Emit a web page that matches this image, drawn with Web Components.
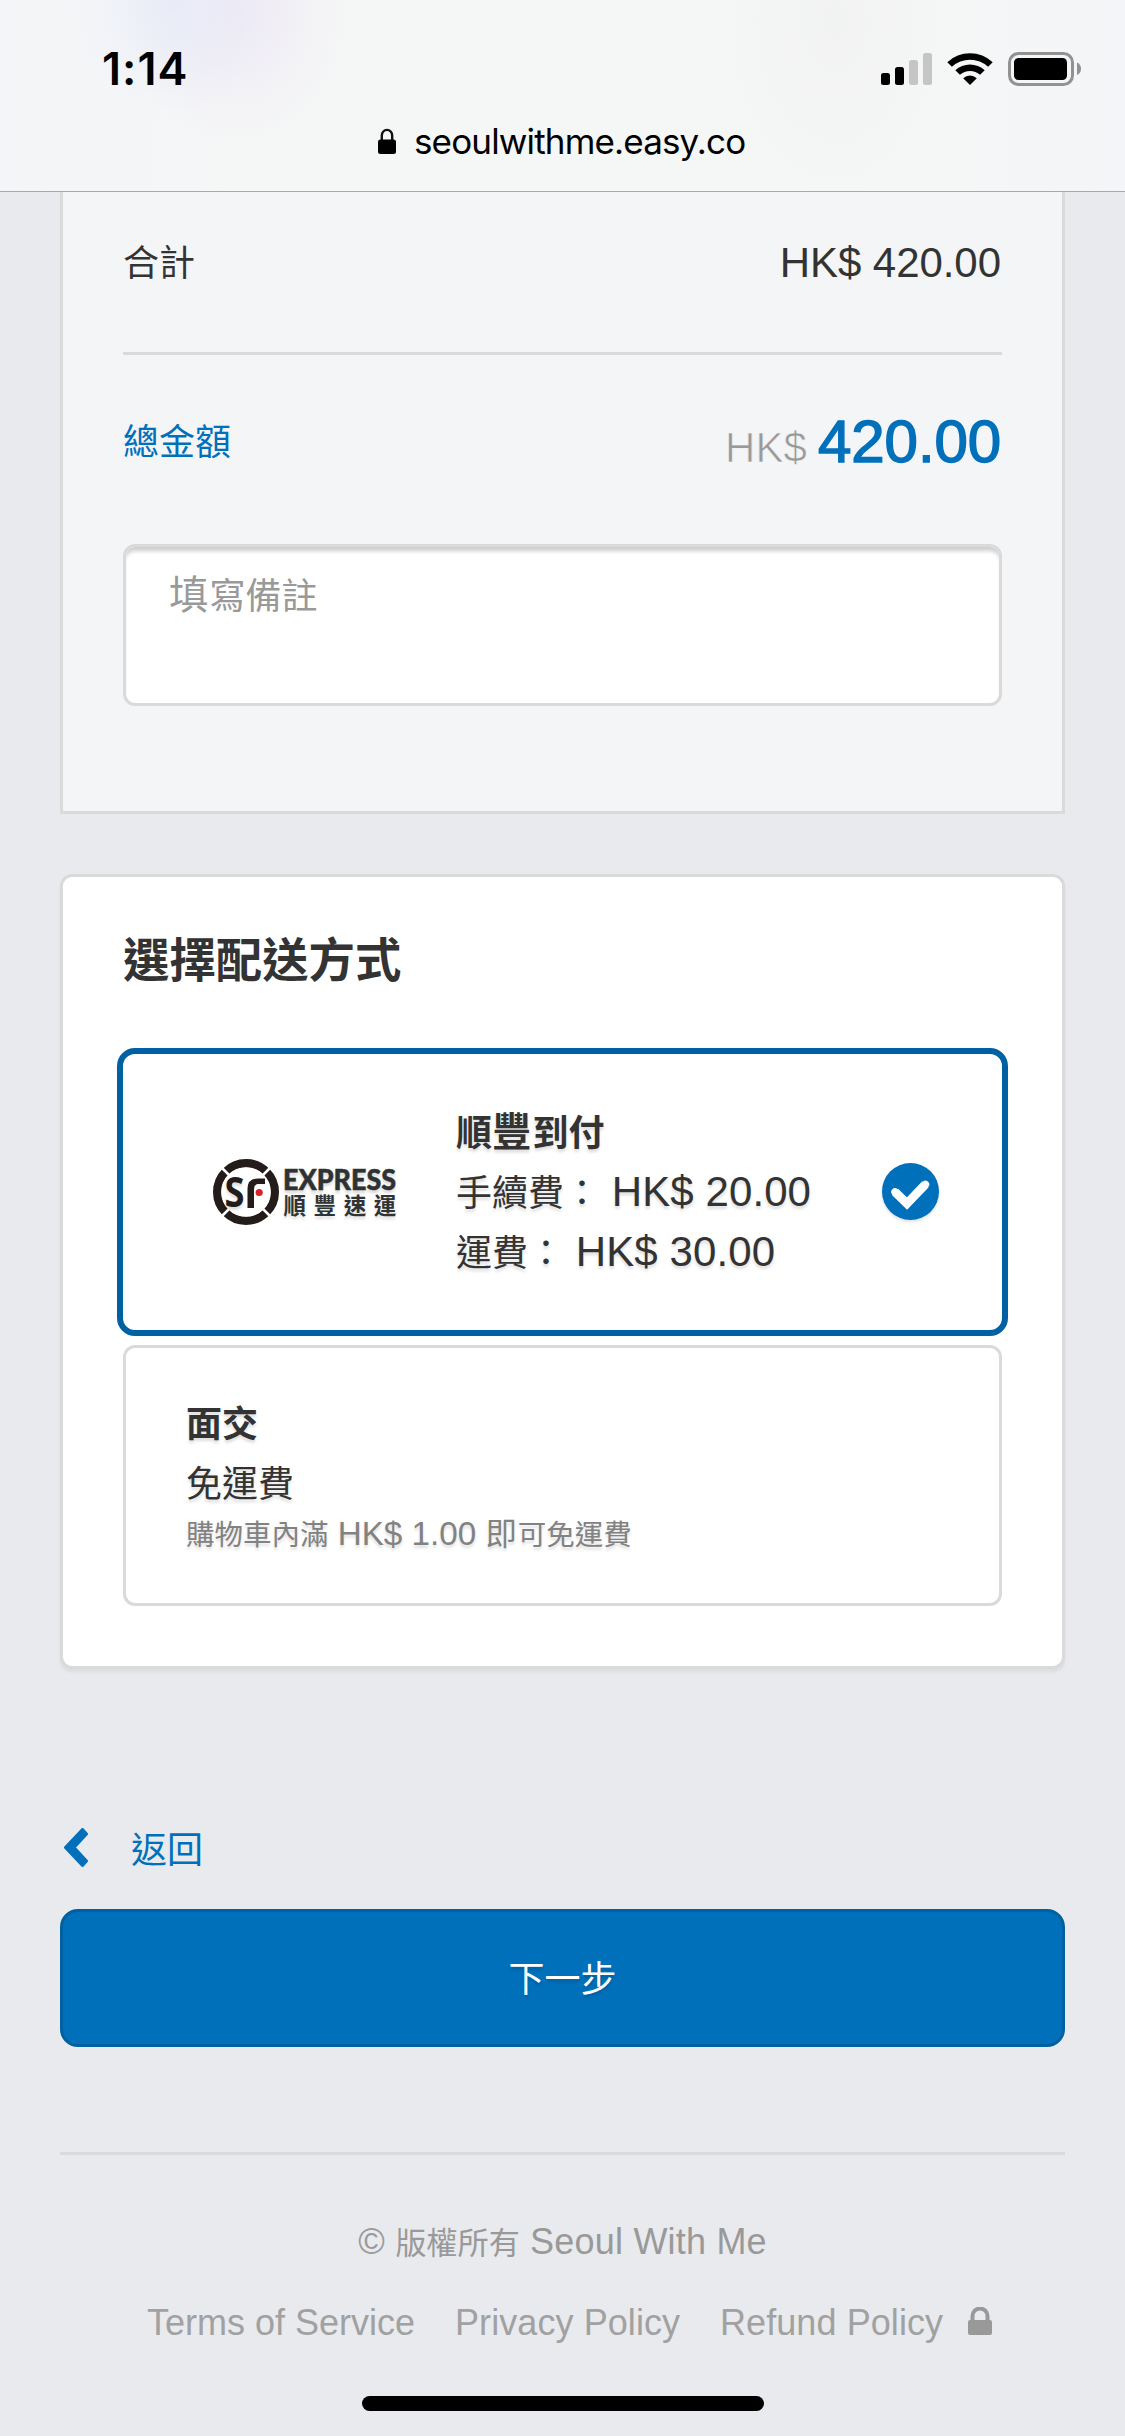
<!DOCTYPE html>
<html lang="zh-Hant">
<head>
<meta charset="utf-8">
<title>seoulwithme.easy.co</title>
<style>
  html, body { margin: 0; }
  body {
    width: 1125px; height: 2436px; overflow: hidden; background: #e9eaee; color: #333;
    font: 42px/60px "Liberation Sans", "Noto Sans CJK TC", sans-serif;
    --blue: #0070bb; --blue-dark: #0061a2; --line: #dadada;
  }
</style>
</head>
<body>
<checkout-page></checkout-page>
<script>
const define = (name, html) => {
  const tpl = document.createElement('template');
  tpl.innerHTML = html;
  customElements.define(name, class extends HTMLElement {
    constructor() {
      super();
      this.attachShadow({ mode: 'open' }).append(tpl.content.cloneNode(true));
    }
  });
};

/* Han text, set smaller than the Latin text beside it */
define('han-text', `<style>:host{display:inline;font-size:.857em;line-height:0;letter-spacing:0}:host([wide]){font-size:.94em;letter-spacing:1px}</style><slot></slot>`);

define('status-bar', `<style>
  :host{display:flex;height:120px;padding:0 44px 0 102px;justify-content:space-between;box-sizing:border-box}
  .time{font:600 45px/60px Inter,sans-serif;color:#000;margin-top:39px;letter-spacing:1px}
  svg{display:block;margin-top:50px}
</style>
<span class="time">1:14</span>
<svg width="200" height="38" viewBox="881 50 200 38">
  <rect x="881" y="73" width="9" height="12" rx="2.5"/>
  <rect x="895" y="67" width="9" height="18" rx="2.5"/>
  <rect x="909" y="60" width="9" height="25" rx="2.5" fill="#c5c5c5"/>
  <rect x="923" y="53" width="9" height="32" rx="2.5" fill="#c5c5c5"/>
  <path d="M947.3 62.2a33 33 0 0 1 45.4 0l-4.6 4.6a26.6 26.6 0 0 0-36.200 0z"/>
  <path d="M955.300 70.200a21.500 21.500 0 0 1 29.400 0l-4.600 4.600a15 15 0 0 0-20.200 0z"/>
  <path d="M963.200 78.200a10 10 0 0 1 13.600 0l-6.800 6.800z"/>
  <rect x="1009.500" y="53.500" width="63" height="31" rx="9" fill="none" stroke="#929292" stroke-width="3"/>
  <rect x="1014" y="58" width="53" height="22" rx="4.500"/>
  <path d="M1077 62.500q4 1.800 4 6.200t-4 6.200z" fill="#929292"/>
</svg>`);

define('address-bar', `<style>
  :host{display:flex;height:71px;padding-left:378px;box-sizing:border-box}
  svg{display:block;margin:8px 18px 0 0}
  span{font:400 35px/42px Inter,sans-serif;color:#000;letter-spacing:-.85px}
</style>
<svg width="18" height="26" viewBox="0 0 18 26"><path d="M3.800 13V7.500a5.200 5.600 0 0 1 10.400 0V13" fill="none" stroke="#111" stroke-width="2.400"/><rect y="11.500" width="18" height="14.500" rx="2.500"/></svg>
<span><slot></slot></span>`);

define('browser-header', `<style>
  :host{display:block;height:192px;box-sizing:border-box;border-bottom:1px solid #a7aaaa;
    background:
      radial-gradient(ellipse 100px 115px at 172px 0,rgba(226,232,248,.6),transparent),
      radial-gradient(ellipse 110px 130px at 235px 10px,rgba(234,227,244,.65),transparent),
      radial-gradient(ellipse 110px 170px at 835px 20px,rgba(240,240,240,.7),transparent),
      linear-gradient(90deg,#f4f5f8,#f5f6f6 20%,#f5f6f6 85%,#f4f5f8)}
</style><status-bar></status-bar><address-bar>seoulwithme.easy.co</address-bar>`);

define('subtotal-row', `<style>
  :host{display:flex;justify-content:space-between;height:119px;padding-top:1px;border-bottom:3px solid var(--line)}
  .k{margin-top:-1px}
  .v{letter-spacing:-.05px;margin-right:1px}
</style><span class="k"><han-text><slot name="label"></slot></han-text></span><span class="v"><slot></slot></span>`);

define('total-row', `<style>
  :host{display:flex;justify-content:space-between;height:90px;margin-top:42px}
  .k{color:var(--blue);margin-top:14px}
  .v{font-size:60px;line-height:90px;color:var(--blue);-webkit-text-stroke:1.500px var(--blue);letter-spacing:-.1px;margin-right:1px}
  .c{font-size:42px;line-height:0;color:#999;-webkit-text-stroke:.700px #f4f5f7;margin-right:11px;letter-spacing:.1px}
</style><span class="k"><han-text><slot name="label"></slot></han-text></span>
<span class="v"><span class="c"><slot name="currency"></slot></span><slot></slot></span>`);

define('note-field', `<style>
  :host{display:block;height:162px;margin-top:57px;box-sizing:border-box;border:3px solid var(--line);border-radius:12px;
    padding:18px 43px;background:#fff;color:#999;box-shadow:inset 0 6px 4px -2px rgba(0,0,0,.2)}
</style><slot></slot>`);

define('summary-panel', `<style>
  :host{display:block;height:622px;margin:0 60px;padding:40px 60px 0;box-sizing:border-box;background:#f4f5f7;
    border:3px solid var(--line);border-top:0}
</style><slot></slot>`);

define('sf-logo', `<style>
  :host{display:block;width:183px;height:66px}
  svg{display:block;overflow:visible}
</style>
<svg width="183" height="66" viewBox="213 1159 183 66">
  <circle cx="246" cy="1192" r="28.900" fill="none" stroke="#231c1b" stroke-width="8.200"/>
  <path d="M221 1167l50 50M271 1167l-50 50" stroke="#fff" stroke-width="2.600"/>
  <circle cx="246" cy="1192" r="24.600" fill="#fff"/>
  <text x="224.500" y="1207" font-family="Open Sans,sans-serif" font-weight="700" font-size="41" textLength="20" lengthAdjust="spacingAndGlyphs" fill="#231c1b">S</text>
  <path d="M247.500 1208v-19q0-10.500 10.500-10.500h7v5.500h-6.500q-4.500 0-4.500 5.500v18.500z" fill="#231c1b"/>
  <circle cx="259.200" cy="1192.500" r="3.600" fill="#d8232a"/>
  <text x="283" y="1189.700" font-family="Lato,sans-serif" font-weight="900" font-size="29" textLength="113" lengthAdjust="spacingAndGlyphs" fill="#2f3333" stroke="#2f3333" stroke-width=".5">EXPRESS</text>
  <text x="283.500" y="1214" font-family="Liberation Sans,Noto Sans CJK TC,sans-serif" font-weight="700" font-size="22.500" letter-spacing="7.600" fill="#2f3333">順豐速運</text>
</svg>`);

define('check-mark', `<style>:host{display:block;margin:-1px 0 0 auto;filter:drop-shadow(0 2px 1.500px rgba(0,0,0,.12))}svg{display:block}</style>
<svg width="57" height="57" viewBox="0 0 57 57"><circle cx="28.500" cy="28.500" r="28.500" fill="var(--blue)"/>
<path d="M13 28.800L25 40.600L43.500 21.300" fill="none" stroke="#fff" stroke-width="8.800" stroke-linejoin="miter"/>
<path d="M13 28.800L25 40.600L43.500 21.300" fill="none" stroke="#fff" stroke-width="7.400" stroke-linecap="round"/></svg>`);

define('ship-option', `<style>
  :host{display:flex;align-items:flex-start;height:261px;box-sizing:border-box;border:3px solid var(--line);border-radius:12px;
    margin-top:9px;padding:45px 60px 0;background:#fff;text-shadow:0 3px 3px rgba(0,0,0,.13)}
  :host([selected]){align-items:center;height:288px;border:6px solid var(--blue-dark);border-radius:18px;margin:57px -6px 0;padding:0 63px 0 90px}
  .t{display:flex;flex-direction:column;white-space:pre}
  :host([selected]) .t{margin:0 0 0 60px}
</style><slot name="logo"></slot><div class="t"><slot></slot></div><slot name="mark"></slot>`);

define('option-line', `<style>
  :host{display:block;letter-spacing:.1px}
  :host([strong]){font-weight:700}
  :host([small]){font-size:33.250px;line-height:42px;color:#828282;letter-spacing:0}
</style><slot></slot>`);

define('shipping-card', `<style>
  :host{display:block;height:795px;margin:60px 60px 0;padding:54px 60px 0;box-sizing:border-box;background:#fff;
    border:3px solid var(--line);border-radius:12px;box-shadow:0 3px 3px rgba(0,0,0,.06)}
  h2{margin:0;font-size:46.400px;line-height:60px;font-weight:700}
</style><h2><slot name="title"></slot></h2><slot></slot>`);

define('back-link', `<style>
  :host{display:flex;height:60px;margin:150px 60px 0;padding-left:3px;color:var(--blue)}
  svg{display:block;margin:9px 42px 0 0}
</style><svg width="26" height="40" viewBox="0 0 26 40"><path d="M19.500 1.500L23.500 6L11 19.500L23.500 33L19.500 37.500L2.500 19.500z" fill="currentColor" stroke="currentColor" stroke-width="3" stroke-linejoin="round"/></svg>
<span><han-text><slot></slot></han-text></span>`);

define('next-button', `<style>
  :host{display:flex;align-items:center;justify-content:center;height:138px;margin:30px 60px 0;box-sizing:border-box;
    border:3px solid var(--blue-dark);border-radius:18px;background:var(--blue);color:#fff;text-shadow:0 3px 3px rgba(0,0,0,.15)}
</style><span><han-text><slot></slot></han-text></span>`);

define('page-footer', `<style>
  :host{display:block;margin:105px 60px 0;border-top:3px solid var(--line);padding-top:60px;font-size:36px;line-height:54px;color:#999}
  .c{text-align:center;letter-spacing:.2px}
  .c ::slotted(han-text){font-size:31.200px}
  .l{display:flex;margin:27px 0 0 87px;color:#a1a1a1}
  .l span{white-space:nowrap;letter-spacing:.08px}
  .l span:first-child{letter-spacing:0}
  svg{display:block;margin-top:11px}
</style><div class="c"><slot></slot></div>
<div class="l"><span style="width:308px">Terms of Service</span><span style="width:265px">Privacy Policy</span><span style="width:248px">Refund Policy</span>
<svg width="24" height="28" viewBox="0 0 24 28" fill="#999"><path d="M4.500 14V9a7.500 7.500 0 0 1 15 0v5" fill="none" stroke="#999" stroke-width="4"/><rect y="13" width="24" height="15" rx="2"/></svg></div>`);

define('home-indicator', `<style>:host{display:block;width:402px;height:15px;margin:46px auto 0;border-radius:7.500px;background:#000}</style>`);

define('checkout-page', `<style>:host{display:flex;flex-direction:column;height:2436px}</style>
<browser-header></browser-header>
<summary-panel>
  <subtotal-row><span slot="label">合計</span>HK$ 420.00</subtotal-row>
  <total-row><span slot="label">總金額</span><span slot="currency">HK$</span>420.00</total-row>
  <note-field><han-text wide>填</han-text><han-text>寫備註</han-text></note-field>
</summary-panel>
<shipping-card><span slot="title">選擇配送方式</span>
  <ship-option selected><sf-logo slot="logo"></sf-logo><option-line strong><han-text>順</han-text><han-text wide>豐</han-text><han-text>到付</han-text></option-line><option-line><han-text>手續費：</han-text> HK$ 20.00</option-line><option-line><han-text>運費：</han-text> HK$ 30.00</option-line><check-mark slot="mark"></check-mark></ship-option>
  <ship-option><option-line strong><han-text>面交</han-text></option-line><option-line><han-text>免運費</han-text></option-line><option-line small><han-text>購物車內滿</han-text> HK$ 1.00 <han-text wide>即</han-text><han-text>可免運費</han-text></option-line></ship-option>
</shipping-card>
<back-link>返回</back-link>
<next-button>下一步</next-button>
<page-footer>© <han-text>版權所有</han-text> Seoul With Me</page-footer>
<home-indicator></home-indicator>`);
</script>
</body>
</html>
